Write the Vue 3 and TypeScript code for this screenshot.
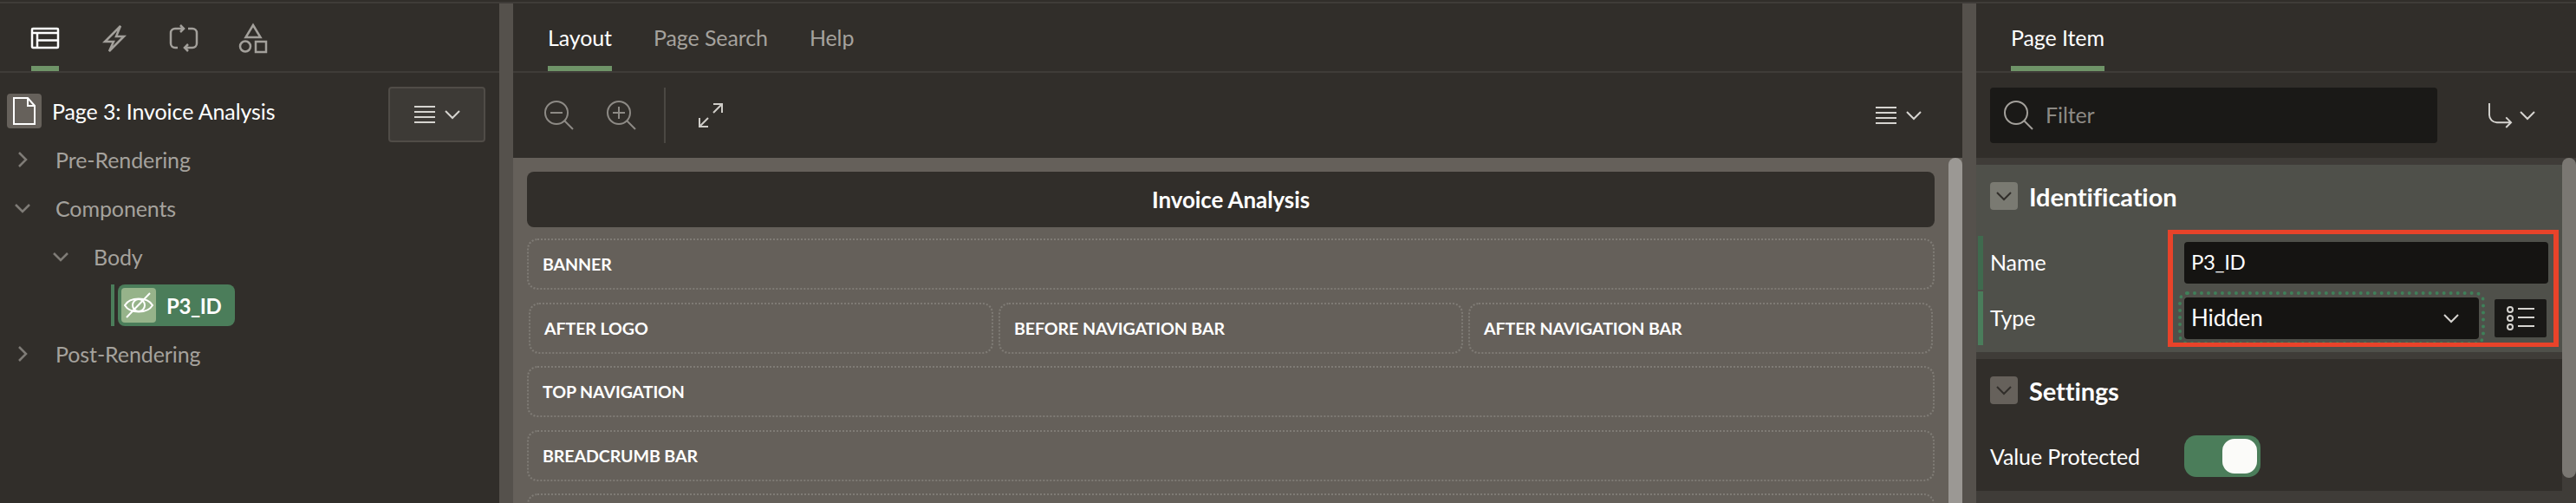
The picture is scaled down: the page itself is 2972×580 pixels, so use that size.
<script setup lang="ts">
const treeRows = [
  { label: 'Pre-Rendering', depth: 0, open: false },
  { label: 'Components', depth: 0, open: true },
  { label: 'Body', depth: 1, open: true },
]
const navSlots = ['AFTER LOGO', 'BEFORE NAVIGATION BAR', 'AFTER NAVIGATION BAR']
</script>

<template>
  <div class="shell">
    <div class="builder">
      <aside class="pane pane-left">
        <nav class="tabs tabs-icons">
          <a class="tab is-active">
            <svg class="ic32 white" viewBox="0 0 32 32"><rect x="1" y="5" width="30" height="22" rx="1" /><path d="M1 10H31M7 10V27M7 18.500H31" /></svg>
          </a>
          <a class="tab">
            <svg class="ic32" viewBox="0 0 32 32"><path d="M23 2 5 20H15L10 31 27 14H18Z" /></svg>
          </a>
          <a class="tab">
            <svg class="ic32" viewBox="0 0 32 32"><path d="M16 5H6A5 5 0 0 0 1 10V22A5 5 0 0 0 6 27H9M21 5H26A5 5 0 0 1 31 10V22A5 5 0 0 1 26 27H17M12 1 16 5 12 9M21 23 17 27 21 31" /></svg>
          </a>
          <a class="tab">
            <svg class="ic32" viewBox="0 0 32 32"><path d="M16 1 24.500 15H7.500Z" /><circle cx="7" cy="25.500" r="6" /><rect x="19" y="20" width="12" height="12" /></svg>
          </a>
        </nav>

        <div class="tree-head">
          <div class="page-node">
            <span class="page-icon">
              <svg class="ic40 white" viewBox="0 0 40 40"><path d="M8 5H24L32 14V35H8ZM24 5V14H32" /></svg>
            </span>
            <span>Page 3: Invoice Analysis</span>
          </div>
          <button class="menu-btn">
            <svg class="burger" viewBox="0 0 24 20"><path d="M0 1H24M0 7H24M0 13H24M0 19H24" /></svg>
            <svg class="chev-down" viewBox="0 0 18 10"><path d="M1 1 9 9 17 1" /></svg>
          </button>
        </div>

        <div v-for="row in treeRows" :key="row.label" class="tree-row" :class="`depth-${row.depth}`">
          <span class="twisty">
            <svg v-if="row.open" class="chev-down dim" viewBox="0 0 18 10"><path d="M1 1 9 9 17 1" /></svg>
            <svg v-else class="chev-right dim" viewBox="0 0 10 16"><path d="M1 0 9 8 1 16" /></svg>
          </span>
          <span>{{ row.label }}</span>
        </div>

        <div class="tree-row item-row">
          <span class="item-bar"></span>
          <span class="item-node">
            <span class="item-icon">
              <svg class="ic40 white thin" viewBox="0 0 40 40">
                <path d="M4 20C10 10 30 10 36 20 30 30 10 30 4 20Z" />
                <circle cx="20" cy="20" r="7" />
                <path d="M6 34 33 6" />
              </svg>
            </span>
            <span>P3_ID</span>
          </span>
        </div>

        <div class="tree-row depth-0">
          <span class="twisty">
            <svg class="chev-right dim" viewBox="0 0 10 16"><path d="M1 0 9 8 1 16" /></svg>
          </span>
          <span>Post-Rendering</span>
        </div>
      </aside>

      <div class="splitter"></div>

      <main class="pane pane-center">
        <nav class="tabs tabs-text">
          <a class="tab is-active">Layout</a>
          <a class="tab">Page Search</a>
          <a class="tab">Help</a>
        </nav>

        <div class="toolbar">
          <svg class="ic32 muted" viewBox="0 0 32 32"><circle cx="14" cy="13" r="13" /><path d="M23 22 33 32M7 13H21" /></svg>
          <svg class="ic32 muted zoom-in" viewBox="0 0 32 32"><circle cx="14" cy="13" r="13" /><path d="M23 22 33 32M7 13H21M14 6V20" /></svg>
          <span class="tool-sep"></span>
          <svg class="expand" viewBox="0 0 28 28"><path d="M17 1H27V11M27 1 17 11M1 17V27H11M1 27 11 17" /></svg>
          <span class="toolbar-end">
            <svg class="burger" viewBox="0 0 24 20"><path d="M0 1H24M0 7H24M0 13H24M0 19H24" /></svg>
            <svg class="chev-down" viewBox="0 0 18 10"><path d="M1 1 9 9 17 1" /></svg>
          </span>
        </div>

        <div class="canvas">
          <div class="canvas-body">
            <div class="page-title">Invoice Analysis</div>
            <div class="slot">BANNER</div>
            <div class="slot-row">
              <div v-for="name in navSlots" :key="name" class="slot">{{ name }}</div>
            </div>
            <div class="slot">TOP NAVIGATION</div>
            <div class="slot">BREADCRUMB BAR</div>
            <div class="slot"></div>
          </div>
          <div class="track"><div class="thumb thumb-canvas"></div></div>
        </div>
      </main>

      <div class="splitter"></div>

      <aside class="pane pane-right">
        <nav class="tabs tabs-text tabs-right">
          <a class="tab is-active">Page Item</a>
        </nav>

        <div class="filter-bar">
          <div class="filter">
            <svg class="ic32 search" viewBox="0 0 32 32"><circle cx="14" cy="13" r="13" /><path d="M23 22 33 32" /></svg>
            <span class="lifted">Filter</span>
          </div>
          <span class="goto">
            <svg class="goto-arrow" viewBox="0 0 28 30"><path d="M1 0V14A9 9 0 0 0 10 23H27M21 17 27 23 21 29" /></svg>
            <svg class="chev-down" viewBox="0 0 18 10"><path d="M1 1 9 9 17 1" /></svg>
          </span>
        </div>

        <div class="props">
          <div class="props-body">
            <section class="group is-current">
              <header class="group-head">
                <span class="collapse">
                  <svg class="chev-small" viewBox="0 0 18 10"><path d="M1 1 9 9 17 1" /></svg>
                </span>
                <span>Identification</span>
              </header>
              <div class="field field-soft">
                <label class="lifted">Name</label>
                <div class="input input-wide"><span class="lifted">P3_ID</span></div>
              </div>
              <div class="field">
                <label class="lifted">Type</label>
                <div class="input input-select">
                  <span class="lifted">Hidden</span>
                  <svg class="chev-down" viewBox="0 0 18 10"><path d="M1 1 9 9 17 1" /></svg>
                </div>
                <button class="lov">
                  <svg viewBox="0 0 32 32"><circle cx="4" cy="6" r="3" /><circle cx="4" cy="16" r="3" /><circle cx="4" cy="26" r="3" /><path d="M13 5H32M13 15H32M13 25H32" /></svg>
                </button>
              </div>
              <div class="callout"></div>
            </section>

            <section class="group">
              <header class="group-head">
                <span class="collapse collapse-dark">
                  <svg class="chev-small" viewBox="0 0 18 10"><path d="M1 1 9 9 17 1" /></svg>
                </span>
                <span>Settings</span>
              </header>
              <div class="field field-plain">
                <label>Value Protected</label>
                <span class="switch"><span class="knob"></span></span>
              </div>
            </section>
          </div>
          <div class="track track-props"><div class="thumb thumb-props"></div></div>
        </div>
      </aside>
    </div>
  </div>
</template>

<style scoped>
.shell {
  height: 580px;
  width: 2972px;
  box-sizing: border-box;
  padding-top: 2px;
  overflow: hidden;
  background: #312e2a;
  color: #fff;
  font-family: Lato, "Liberation Sans", sans-serif;
  font-size: 25px;
  letter-spacing: -0.1px;
}

.builder {
  display: flex;
  height: 578px;
  box-sizing: border-box;
  border-top: 2px solid #3f3c38;
}

.pane {
  display: flex;
  flex-direction: column;
  min-width: 0;
  background: #312e2a;
}

.pane-left {
  width: 576px;
}

.pane-center {
  width: 1672px;
}

.pane-right {
  width: 692px;
}

.splitter {
  width: 16px;
  flex: none;
  background: #55514c;
}

svg {
  display: block;
  flex: none;
  fill: none;
  overflow: visible;
  stroke: currentColor;
  stroke-width: 2;
}

.lifted {
  padding-bottom: 3px;
}

.ic32 {
  width: 32px;
  height: 32px;
  color: #a3a09b;
  stroke-width: 2.500;
}

.ic40 {
  width: 40px;
  height: 40px;
}

.white {
  color: #fff;
}

.thin {
  stroke-width: 2;
}

.muted {
  color: #8d8a85;
  stroke-width: 2;
}

.search {
  color: #a3a09b;
  stroke-width: 2;
}

.burger {
  width: 24px;
  height: 20px;
  color: #d6d4d0;
}

.chev-down {
  width: 18px;
  height: 10px;
  color: #d6d4d0;
}

.chev-right {
  width: 10px;
  height: 16px;
}

.dim {
  color: #7f7c77;
  stroke-width: 2.500;
}

.tabs {
  display: flex;
  flex: none;
  height: 80px;
  box-sizing: border-box;
  border-bottom: 2px solid #3f3c38;
}

.tabs-icons {
  gap: 48px;
  padding-left: 36px;
}

.tabs-icons .tab {
  padding-top: 24px;
  line-height: normal;
}

.tabs-text {
  gap: 48px;
  padding-left: 40px;
}

.tab {
  display: block;
  box-sizing: border-box;
  height: 78px;
  line-height: 78px;
  color: #a5a29d;
  border-bottom: 6px solid transparent;
}

.tab.is-active {
  color: #fff;
  border-bottom-color: #6f9468;
}

.tree-head {
  display: flex;
  justify-content: space-between;
  align-items: flex-start;
  height: 72px;
  padding: 16px 16px 0 8px;
  box-sizing: border-box;
}

.page-node {
  display: flex;
  align-items: center;
  gap: 12px;
  margin-top: 8px;
}

.page-icon {
  display: block;
  width: 40px;
  height: 40px;
  border-radius: 4px;
  background: #66615b;
}

.menu-btn {
  display: flex;
  align-items: center;
  justify-content: center;
  gap: 11px;
  width: 112px;
  height: 64px;
  padding: 0;
  border: 2px solid #504c47;
  border-radius: 4px;
  background: #3d3a36;
}

.tree-row {
  display: flex;
  align-items: center;
  height: 56px;
  color: #a5a29d;
}

.twisty {
  display: flex;
  justify-content: center;
  width: 36px;
  margin-left: 8px;
  margin-right: 20px;
}

.depth-1 {
  padding-left: 44px;
}

.item-row {
  padding-left: 128px;
  gap: 4px;
}

.item-bar {
  width: 4px;
  height: 48px;
  background: #4b7d5a;
}

.item-node {
  display: flex;
  align-items: center;
  gap: 12px;
  height: 48px;
  width: 135px;
  box-sizing: border-box;
  padding-left: 4px;
  border-radius: 8px;
  background: #4b7d5a;
  color: #fff;
  font-size: 24px;
  font-weight: 700;
  letter-spacing: -0.4px;
}

.item-icon {
  display: block;
  width: 40px;
  height: 40px;
  border-radius: 4px;
  background: #96b38a;
}

.toolbar {
  display: flex;
  flex: none;
  align-items: center;
  height: 98px;
  padding-left: 36px;
  padding-right: 47px;
}

.zoom-in {
  margin-left: 40px;
}

.tool-sep {
  width: 2px;
  height: 64px;
  margin: 0 38px 0 34px;
  background: #4b4843;
}

.expand {
  width: 28px;
  height: 28px;
  color: #cfcdc8;
}

.toolbar-end {
  display: flex;
  align-items: center;
  gap: 11px;
  margin-left: auto;
}

.canvas {
  display: flex;
  flex: 1;
  min-height: 0;
  overflow: hidden;
  background: #65605a;
}

.canvas-body {
  flex: 1;
  min-width: 0;
  padding: 16px;
}

.page-title {
  display: flex;
  align-items: center;
  justify-content: center;
  height: 64px;
  margin-bottom: 13px;
  border-radius: 8px;
  background: #312e2a;
  font-size: 26px;
  font-weight: 700;
}

.slot {
  display: flex;
  align-items: center;
  box-sizing: border-box;
  height: 59px;
  margin-bottom: 14.500px;
  padding-left: 16px;
  border: 2px dotted #7f7b75;
  border-radius: 12px;
  font-size: 19.600px;
  font-weight: 700;
}

.slot-row {
  display: flex;
  gap: 6px;
  padding: 0 2px;
}

.slot-row .slot {
  flex: 1;
  min-width: 0;
}

.track {
  flex: none;
  width: 16px;
}

.thumb {
  width: 16px;
  border-radius: 8px;
}

.thumb-canvas {
  height: 600px;
  background: #9b9894;
}

.filter-bar {
  display: flex;
  flex: none;
  align-items: center;
  height: 98px;
  padding-left: 16px;
}

.filter {
  display: flex;
  align-items: center;
  gap: 16px;
  width: 516px;
  height: 64px;
  box-sizing: border-box;
  padding-left: 16px;
  border-radius: 4px;
  background: #1a1917;
  color: #8d8a85;
}

.goto {
  display: flex;
  align-items: center;
  gap: 9px;
  margin-left: 59px;
}

.goto-arrow {
  width: 27px;
  height: 29px;
  color: #d6d4d0;
}

.props {
  display: flex;
  flex: 1;
  min-height: 0;
}

.props-body {
  flex: 1;
  min-width: 0;
  padding-top: 8px;
  background: #3f3c38;
}

.track-props {
  background: #3f3c38;
}

.thumb-props {
  height: 369px;
  background: #7a7772;
}

.group {
  position: relative;
  padding: 20px 0 16px;
  margin-bottom: 8px;
  background: #312e2a;
}

.group.is-current {
  height: 216px;
  box-sizing: border-box;
  background: #4f504a;
}

.group-head {
  display: flex;
  align-items: center;
  gap: 13px;
  height: 32px;
  margin-bottom: 30px;
  padding-left: 16px;
  font-size: 29px;
  font-weight: 700;
}

.collapse {
  display: flex;
  align-items: center;
  justify-content: center;
  width: 32px;
  height: 32px;
  border-radius: 4px;
  background: #7a7a72;
}

.collapse-dark {
  background: #66615b;
}

.chev-small {
  width: 18px;
  height: 10px;
  color: #312e2a;
}

.field {
  display: flex;
  align-items: center;
  height: 62px;
  margin: 0 0 2px 2px;
  padding-left: 8px;
  border-left: 6px solid #4a7d5b;
}

.field-soft {
  border-left-color: #3f6a4e;
}

.field label {
  width: 224px;
  flex: none;
}

.field-plain {
  height: 48px;
  margin: 36px 0 0 2px;
  border-left: 6px solid transparent;
}

.input {
  display: flex;
  align-items: center;
  box-sizing: border-box;
  height: 48px;
  padding-left: 8px;
  border-radius: 4px;
  background: #151412;
}

.input-wide {
  width: 420px;
  font-size: 24px;
  letter-spacing: -0.4px;
}

.input-select {
  justify-content: space-between;
  width: 340px;
  padding-right: 23px;
  font-size: 26px;
  outline: 4px dotted #3f8059;
  outline-offset: 3px;
}

.lov {
  display: flex;
  align-items: center;
  justify-content: center;
  width: 60px;
  height: 44px;
  margin-left: 18px;
  padding: 0;
  border: none;
  border-radius: 2px;
  background: #1a1917;
}

.lov svg {
  width: 32px;
  height: 32px;
  color: #d6d4d0;
}

.switch {
  display: flex;
  justify-content: flex-end;
  align-items: center;
  width: 88px;
  height: 48px;
  box-sizing: border-box;
  padding-right: 4px;
  border-radius: 14px;
  background: #4b7d5a;
}

.knob {
  display: block;
  width: 40px;
  height: 40px;
  border-radius: 14px;
  background: #fbfbf9;
}

.callout {
  position: absolute;
  left: 221px;
  top: 75px;
  width: 451px;
  height: 135px;
  box-sizing: border-box;
  border: 5px solid #e8432a;
  border-left-width: 6px;
  border-right-width: 6px;
}
</style>

<style>
html,
body {
  background: #312e2a;
}
</style>
